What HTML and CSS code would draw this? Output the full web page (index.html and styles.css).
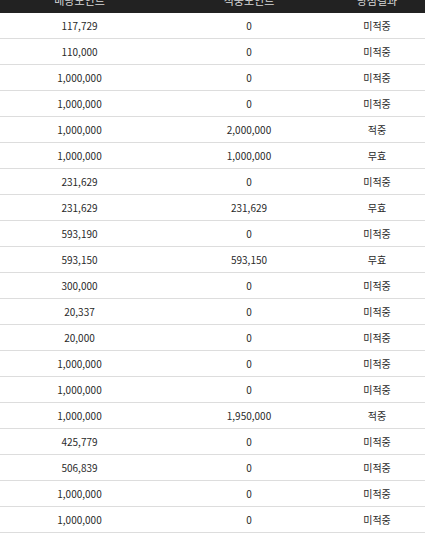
FILE: index.html
```html
<!DOCTYPE html>
<html lang="ko">
<head>
<meta charset="utf-8">
<link rel="stylesheet" href="styles.css">
</head>
<body>
<div class="table">
  <div class="row head"><div class="c1">배당포인트</div><div class="c2">적중포인트</div><div class="c3">당첨결과</div></div>
  <div class="row"><div class="c1">117,729</div><div class="c2">0</div><div class="c3">미적중</div></div>
  <div class="row"><div class="c1">110,000</div><div class="c2">0</div><div class="c3">미적중</div></div>
  <div class="row"><div class="c1">1,000,000</div><div class="c2">0</div><div class="c3">미적중</div></div>
  <div class="row"><div class="c1">1,000,000</div><div class="c2">0</div><div class="c3">미적중</div></div>
  <div class="row"><div class="c1">1,000,000</div><div class="c2">2,000,000</div><div class="c3">적중</div></div>
  <div class="row"><div class="c1">1,000,000</div><div class="c2">1,000,000</div><div class="c3">무효</div></div>
  <div class="row"><div class="c1">231,629</div><div class="c2">0</div><div class="c3">미적중</div></div>
  <div class="row"><div class="c1">231,629</div><div class="c2">231,629</div><div class="c3">무효</div></div>
  <div class="row"><div class="c1">593,190</div><div class="c2">0</div><div class="c3">미적중</div></div>
  <div class="row"><div class="c1">593,150</div><div class="c2">593,150</div><div class="c3">무효</div></div>
  <div class="row"><div class="c1">300,000</div><div class="c2">0</div><div class="c3">미적중</div></div>
  <div class="row"><div class="c1">20,337</div><div class="c2">0</div><div class="c3">미적중</div></div>
  <div class="row"><div class="c1">20,000</div><div class="c2">0</div><div class="c3">미적중</div></div>
  <div class="row"><div class="c1">1,000,000</div><div class="c2">0</div><div class="c3">미적중</div></div>
  <div class="row"><div class="c1">1,000,000</div><div class="c2">0</div><div class="c3">미적중</div></div>
  <div class="row"><div class="c1">1,000,000</div><div class="c2">1,950,000</div><div class="c3">적중</div></div>
  <div class="row"><div class="c1">425,779</div><div class="c2">0</div><div class="c3">미적중</div></div>
  <div class="row"><div class="c1">506,839</div><div class="c2">0</div><div class="c3">미적중</div></div>
  <div class="row"><div class="c1">1,000,000</div><div class="c2">0</div><div class="c3">미적중</div></div>
  <div class="row"><div class="c1">1,000,000</div><div class="c2">0</div><div class="c3">미적중</div></div>
</div>
</body>
</html>
```
FILE: styles.css
```css
html, body {
  margin: 0;
  padding: 0;
  background: #ffffff;
}
body {
  font-family: "Noto Sans CJK KR", "Noto Sans", sans-serif;
  font-size: 10px;
  color: #2a2a2a;
}
.table {
  width: 425px;
  margin-top: -13px;
}
.row {
  display: grid;
  grid-template-columns: 169px 160px 96px;
  height: 25px;
  align-items: center;
  text-align: center;
  border-bottom: 1px solid #dddddd;
}
.row.head {
  height: 26px;
  border-bottom: none;
  background: #222222;
  color: #d8d8d8;
  font-size: 11px;
}
.c1 {
  padding-right: 10px;
}
```
